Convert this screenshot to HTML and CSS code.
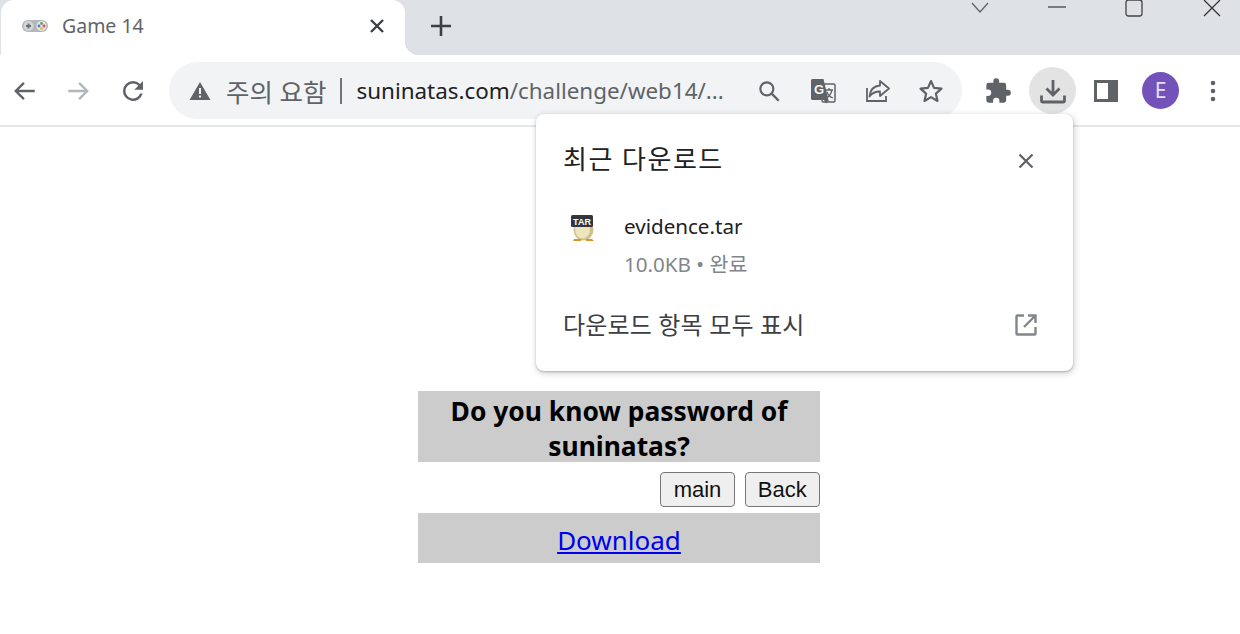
FILE: index.html
```html
<!DOCTYPE html>
<html lang="ko">
<head>
    <meta charset="UTF-8">
    <meta name="viewport" content="width=device-width, initial-scale=1.0">
    <title>Game 14</title>
    <link rel="stylesheet" href="styles.css">
</head>
<body>
    <header class="tab-strip">
        <div class="tab">
            <svg class="favicon" width="28" height="16" viewBox="0 0 28 16">
                <rect x="1" y="2" width="26" height="12" rx="6" fill="#b4b7b9"/>
                <circle cx="7.5" cy="8" r="5" fill="#d3d5d6"/>
                <circle cx="20.5" cy="8" r="5" fill="#e4e5e6"/>
                <path d="M5 8h5M7.500 5.500v5" stroke="#6d7073" stroke-width="1.800"/>
                <circle cx="20.500" cy="5.500" r="1.400" fill="#5aa469"/>
                <circle cx="23" cy="8" r="1.400" fill="#d9534f"/>
                <circle cx="20.500" cy="10.500" r="1.400" fill="#e9b44c"/>
                <circle cx="18" cy="8" r="1.400" fill="#4a7fc1"/>
            </svg>
            <span class="tab-title">Game 14</span>
            <svg class="tab-close" width="16" height="16" viewBox="0 0 16 16"><path d="M2 2l12 12M14 2L2 14" stroke="#3c4043" stroke-width="2.400"/></svg>
        </div>
        <div class="new-tab">
            <svg width="22" height="22" viewBox="0 0 22 22"><path d="M11 1v20M1 11h20" stroke="#3c4043" stroke-width="2.600"/></svg>
        </div>
        <div class="window-controls">
            <svg class="win-chevron" width="20" height="12" viewBox="0 0 20 12"><path d="M2 1l8 9 8-9" fill="none" stroke="#5f6368" stroke-width="1.300"/></svg>
            <svg class="win-min" width="18" height="12" viewBox="0 0 18 12"><path d="M0 7h18" stroke="#444" stroke-width="1.300"/></svg>
            <svg class="win-max" width="18" height="18" viewBox="0 0 18 18"><rect x="1" y="0" width="16" height="16" rx="2.500" fill="none" stroke="#444" stroke-width="1.300"/></svg>
            <svg class="win-close" width="18" height="18" viewBox="0 0 18 18"><path d="M1 0l16 16M17 0L1 16" stroke="#333" stroke-width="1.300"/></svg>
        </div>
    </header>

    <nav class="toolbar">
        <svg class="nav-btn" width="26" height="26" viewBox="0 0 24 24"><path d="M21 12H4M11 4.500L3.500 12l7.500 7.500" fill="none" stroke="#5f6368" stroke-width="2.200"/></svg>
        <svg class="nav-btn forward" width="26" height="26" viewBox="0 0 24 24"><path d="M3 12h17M13 4.500l7.500 7.500-7.500 7.500" fill="none" stroke="#b4b7ba" stroke-width="2.200"/></svg>
        <svg class="nav-btn reload" width="30" height="30" viewBox="0 0 24 24"><path d="M17.650 6.350A7.960 7.960 0 0 0 12 4a8 8 0 1 0 7.730 10h-2.080A6 6 0 1 1 12 6c1.660 0 3.140.69 4.220 1.780L13 11h7V4l-2.350 2.350z" fill="#5f6368"/></svg>

        <div class="omnibox">
            <svg class="warn" width="22" height="20" viewBox="0 0 22 20"><path d="M11 1L.500 19h21z" fill="#5f6368"/><path d="M10 7h2v6h-2zM10 14.500h2v2h-2z" fill="#f1f3f4"/></svg>
            <span class="warn-text">주의 요함</span>
            <span class="omni-sep"></span>
            <span class="url">suninatas.com<span class="url-path">/challenge/web14/...</span></span>
            <div class="omni-icons">
                <svg width="26" height="26" viewBox="0 0 24 24"><circle cx="10" cy="10" r="6" fill="none" stroke="#5f6368" stroke-width="2"/><path d="M14.500 14.500L21 21" stroke="#5f6368" stroke-width="2.200"/></svg>
                <svg width="28" height="28" viewBox="0 0 28 28">
                    <rect x="13" y="7" width="13" height="18" rx="1.500" fill="#f1f3f4" stroke="#5f6368" stroke-width="1.500"/>
                    <path d="M3.500 2h11l5 21H3.500A1.500 1.500 0 0 1 2 21.500v-18A1.500 1.500 0 0 1 3.500 2z" fill="#5f6368"/>
                    <path d="M15 23l2 3.500 3-3.500z" fill="#5f6368"/>
                    <text x="5" y="17" class="translate-g">G</text>
                    <path d="M16 13h8M20 11v2M23 13c-1 4-3 7-6 8M18 15c1 3 3 5 6 6" fill="none" stroke="#5f6368" stroke-width="1.300"/>
                </svg>
                <svg class="share" width="28" height="28" viewBox="0 0 28 28"><path d="M4 11v13h19v-5" fill="none" stroke="#5f6368" stroke-width="1.800"/><path d="M17 4l9 7.500-9 7.500v-4.500c-5 0-8 1.500-10.500 5 .5-6 4-10.500 10.500-11z" fill="none" stroke="#5f6368" stroke-width="1.800" stroke-linejoin="round"/></svg>
                <svg width="26" height="26" viewBox="0 0 24 24"><path d="M12 2.800l2.800 6.300 6.900.7-5.200 4.600 1.500 6.800-6-3.500-6 3.500 1.500-6.800-5.200-4.600 6.900-.7z" fill="none" stroke="#5f6368" stroke-width="2" stroke-linejoin="round"/></svg>
            </div>
        </div>

        <div class="tool-icons">
            <svg class="puzzle" width="28" height="28" viewBox="0 0 24 24"><path d="M20.500 11H19V7a2 2 0 0 0-2-2h-4V3.500a2.500 2.500 0 0 0-5 0V5H4a2 2 0 0 0-2 2v3.800h1.500a2.700 2.700 0 0 1 0 5.400H2V20a2 2 0 0 0 2 2h3.800v-1.500a2.700 2.700 0 0 1 5.400 0V22H17a2 2 0 0 0 2-2v-4h1.500a2.500 2.500 0 0 0 0-5z" fill="#5f6368"/></svg>
            <div class="download-btn">
                <svg width="28" height="28" viewBox="0 0 28 28"><path d="M14 3v15M7.500 11.500L14 18l6.500-6.500" fill="none" stroke="#5f6368" stroke-width="2.800"/><path d="M2.500 18.500V24a1 1 0 0 0 1 1h21a1 1 0 0 0 1-1v-5.500" fill="none" stroke="#5f6368" stroke-width="2.800"/></svg>
            </div>
            <svg class="side-panel" width="24" height="22" viewBox="0 0 24 22"><path d="M0 0h24v22H0z" fill="#5f6368"/><path d="M3 3h11v16H3z" fill="#fff"/></svg>
            <div class="avatar">E</div>
            <svg class="kebab" width="6" height="22" viewBox="0 0 6 22"><circle cx="3" cy="3" r="2.300" fill="#5f6368"/><circle cx="3" cy="11" r="2.300" fill="#5f6368"/><circle cx="3" cy="19" r="2.300" fill="#5f6368"/></svg>
        </div>
    </nav>

    <div class="download-popup">
        <div class="popup-head">
            <span class="popup-title">최근 다운로드</span>
            <svg class="popup-close" width="16" height="16" viewBox="0 0 16 16"><path d="M1.500 1.500l13 13M14.500 1.500l-13 13" stroke="#5f6368" stroke-width="2.200"/></svg>
        </div>
        <div class="popup-item">
            <svg class="tar-icon" width="26" height="28" viewBox="0 0 26 28">
                <ellipse cx="13.500" cy="15.500" rx="10" ry="11" fill="#cfc08a"/>
                <ellipse cx="12.500" cy="15" rx="7.500" ry="9.500" fill="#eee5bf"/>
                <path d="M4 25h7v2H3zM16 25h6l2 2h-8z" fill="#d19a2e"/>
                <rect x="1" y="1" width="22" height="12" rx="1.500" fill="#33363a"/>
                <text x="12" y="10.500" class="tar-label">TAR</text>
            </svg>
            <div class="item-text">
                <div class="item-name">evidence.tar</div>
                <div class="item-meta">10.0KB • 완료</div>
            </div>
        </div>
        <div class="popup-foot">
            <span>다운로드 항목 모두 표시</span>
            <svg class="foot-icon" width="24" height="24" viewBox="0 0 24 24"><path d="M10 2.500H3.500a1 1 0 0 0-1 1v17a1 1 0 0 0 1 1h17a1 1 0 0 0 1-1V14" fill="none" stroke="#80868b" stroke-width="2.400"/><path d="M14 2.500h7.500V10M21 3L10 14" fill="none" stroke="#80868b" stroke-width="2.400"/></svg>
        </div>
    </div>

    <main class="page">
        <div class="panel">
            <h1 class="question">Do you know password of suninatas?</h1>
            <div class="btn-row">
                <button>main</button>
                <button>Back</button>
            </div>
            <div class="download-row"><a href="#">Download</a></div>
        </div>
    </main>
</body>
</html>
```

FILE: styles.css
```css
body {
    margin: 0;
    height: 634px;
    overflow: hidden;
    background: #fff;
    font-family: "Noto Sans", "Noto Sans CJK KR", sans-serif;
}

/* 탭 영역 */
.tab-strip {
    display: flex;
    height: 55px;
    background: #dee1e6;
}

.tab {
    display: flex;
    align-items: center;
    width: 404px;
    margin-left: 1px;
    height: 55px;
    box-sizing: border-box;
    padding: 0 20px 4px 20px;
    background: #fff;
    border-radius: 13px 13px 0 0;
    position: relative;
}

/* 탭 오른쪽 아래 곡선 */
.tab::after {
    content: "";
    position: absolute;
    right: -14px;
    bottom: 0;
    width: 14px;
    height: 14px;
    background: radial-gradient(circle at 100% 0, #dee1e6 14px, #fff 14.500px);
}

.favicon {
    flex: none;
}

.tab-title {
    margin-left: 13px;
    flex: 1;
    font-size: 19.500px;
    color: #5f6368;
}

.new-tab {
    margin-left: 25px;
    padding-top: 15px;
}

.window-controls {
    margin-left: auto;
    display: flex;
    align-items: flex-start;
}

.win-chevron {
    margin: 2px 0 0 0;
}

.win-min {
    margin: 0 0 0 58px;
}

.win-max {
    margin: 0 0 0 59px;
}

.win-close {
    margin: 0 19px 0 60px;
}

/* 툴바 */
.toolbar {
    display: flex;
    align-items: center;
    height: 72px;
    box-sizing: border-box;
    border-bottom: 2px solid #e6e7e9;
    padding: 1px 0 0 12px;
}

.nav-btn.forward {
    margin-left: 27px;
}

.nav-btn.reload {
    margin-left: 27px;
}

.omnibox {
    display: flex;
    align-items: center;
    width: 793px;
    height: 57px;
    margin-left: 21px;
    box-sizing: border-box;
    padding: 0 18px 0 20px;
    background: #f1f3f4;
    border-radius: 29px;
}

.warn-text {
    margin-left: 15px;
    font-size: 25.500px;
    color: #5f6368;
}

.omni-sep {
    width: 2px;
    height: 26px;
    margin: 0 14px 0 14px;
    background: #70757a;
}

.url {
    font-size: 22.400px;
    color: #202124;
    white-space: nowrap;
}

.url-path {
    color: #5f6368;
}

.omni-icons {
    margin-left: auto;
    display: flex;
    align-items: center;
    gap: 27px;
}

.share {
    margin-left: -1px;
}

.translate-g {
    font: bold 13px "Liberation Sans", sans-serif;
    fill: #f1f3f4;
}

.tool-icons {
    display: flex;
    align-items: center;
    margin-left: 22px;
}

.download-btn {
    display: flex;
    align-items: center;
    justify-content: center;
    width: 47px;
    height: 47px;
    margin-left: 17px;
    border-radius: 50%;
    background: #e3e3e3;
}

.side-panel {
    margin-left: 18px;
}

.avatar {
    width: 37px;
    height: 37px;
    margin-left: 24px;
    border-radius: 50%;
    background: #7353ba;
    color: #e8e0f5;
    font-size: 21px;
    line-height: 37px;
    text-align: center;
}

.kebab {
    margin-left: 31px;
}

/* 다운로드 팝업 */
.download-popup {
    position: absolute;
    left: 536px;
    top: 114px;
    width: 537px;
    height: 257px;
    box-sizing: border-box;
    padding: 0 28px 0 27px;
    background: #fff;
    border-radius: 8px;
    box-shadow: 0 1px 2px rgba(60, 64, 67, 0.3), 1px 2px 6px 1px rgba(60, 64, 67, 0.2);
}

.popup-head {
    display: flex;
    justify-content: space-between;
    align-items: center;
    height: 90px;
    padding-right: 11px;
}

.popup-title {
    margin-bottom: 2px;
    font-size: 26px;
    letter-spacing: 1.500px;
    color: #202124;
}

.popup-close {
    margin-top: 4px;
}

.popup-item {
    display: flex;
    height: 94px;
}

.tar-icon {
    margin: 10px 0 0 7px;
    flex: none;
}

.tar-label {
    font: bold 9px "Liberation Sans", sans-serif;
    fill: #fff;
    text-anchor: middle;
}

.item-text {
    margin-left: 28px;
}

.item-name {
    font-size: 20.600px;
    line-height: 28px;
    margin-top: 8px;
    color: #202124;
}

.item-meta {
    font-size: 20.600px;
    line-height: 28px;
    margin-top: 10px;
    color: #80868b;
}

.popup-foot {
    display: flex;
    justify-content: space-between;
    align-items: center;
    height: 50px;
    padding-right: 7px;
    font-size: 24px;
    letter-spacing: 0.150px;
    color: #3c4043;
}

.foot-icon {
    margin-top: 3px;
}

/* 페이지 본문 */
.page {
    display: flex;
    justify-content: center;
    padding: 264px 2px 0 0;
}

.panel {
    width: 402px;
}

.question {
    margin: 0;
    padding: 3px 10px 0;
    box-sizing: border-box;
    background: #ccc;
    font-size: 26.400px;
    line-height: 35px;
    height: 71px;
    text-align: center;
    font-weight: bold;
    color: #000;
}

.btn-row {
    display: flex;
    justify-content: flex-end;
    gap: 10px;
    margin: 10px 0 6px;
}

button {
    height: 35px;
    padding: 0 12.250px;
    border: 1.500px solid #767676;
    border-radius: 4px;
    background: #efefef;
    color: #111;
    font: 22px "Liberation Sans", sans-serif;
}

.download-row {
    height: 50px;
    background: #ccc;
    text-align: center;
    font-size: 26px;
    line-height: 54px;
}

.download-row a {
    color: #0000ee;
}
```
